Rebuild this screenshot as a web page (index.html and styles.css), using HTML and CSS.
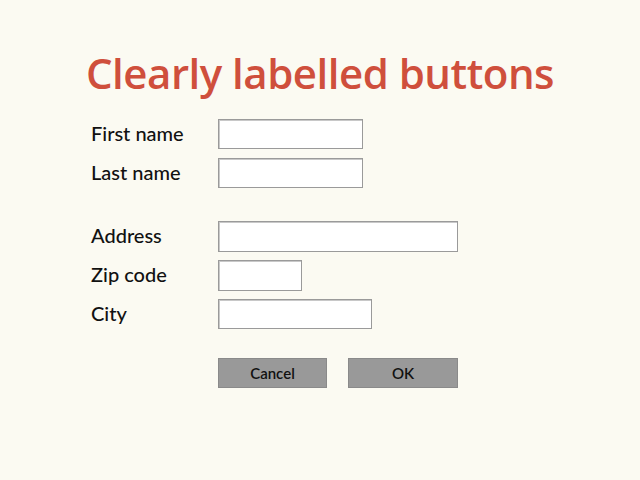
FILE: index.html
```html
<!DOCTYPE html>
<html>
<head>
<meta charset="utf-8">
<link rel="stylesheet" href="styles.css">
</head>
<body>
<h1 class="title">Clearly labelled buttons</h1>
<form class="form">
  <label class="label">First name</label>
  <input class="field field-name" type="text">
  <label class="label">Last name</label>
  <input class="field field-name" type="text">
  <div class="spacer"></div>
  <label class="label">Address</label>
  <input class="field field-address" type="text">
  <label class="label">Zip code</label>
  <input class="field field-zip" type="text">
  <label class="label">City</label>
  <input class="field field-city" type="text">
  <div class="buttons">
    <button type="button" class="btn">Cancel</button>
    <button type="button" class="btn">OK</button>
  </div>
</form>
</body>
</html>
```

FILE: styles.css
```css
html, body {
  margin: 0;
  padding: 0;
  background: #fbfaf2;
  width: 640px;
  height: 480px;
  overflow: hidden;
}
.title {
  margin: 0;
  padding-top: 45px;
  text-align: center;
  font-family: "Open Sans", sans-serif;
  font-weight: 600;
  font-size: 42px;
  line-height: 56px;
  color: #cf4f3c;
  letter-spacing: -0.5px;
}
.form {
  display: grid;
  grid-template-columns: 127px auto;
  grid-template-rows: 30px 30px 15px 30px 30px 30px auto;
  row-gap: 9px;
  padding-left: 91px;
  margin-top: 18px;
  justify-items: start;
  align-items: start;
}
.label {
  font-family: "Lato", sans-serif;
  font-weight: 500;
  font-size: 20px;
  color: #111;
  line-height: 30px;
  margin-top: -1px;
}
.field {
  box-sizing: border-box;
  height: 31px;
  border: 1px solid #9a9a9a;
  box-shadow: inset 1px 1px 0 #c8c8c8;
  background: #fff;
  margin: 0;
  padding: 0;
}
.field-name { width: 145px; height: 30px; }
.field-address { width: 240px; }
.field-zip { width: 84px; }
.field-city { width: 154px; height: 30px; }
.spacer {
  grid-column: 1 / 3;
  height: 15px;
}
.buttons {
  grid-column: 2;
  display: flex;
  gap: 21px;
  margin-top: 20px;
}
.btn {
  box-sizing: border-box;
  width: 110px;
  height: 30px;
  background: #999999;
  border: 1px solid #8a8a8a;
  font-family: "Lato", sans-serif;
  font-weight: 600;
  font-size: 15px;
  color: #111;
  padding: 0;
}
.btn:first-child { width: 109px; }
```
